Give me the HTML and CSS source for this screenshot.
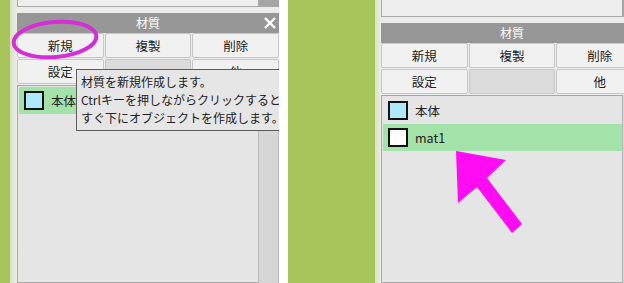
FILE: index.html
```html
<!DOCTYPE html>
<html lang="ja">
<head>
<meta charset="utf-8">
<link rel="stylesheet" href="styles.css">
</head>
<body>
<div class="page">
  <div class="shot shot--left">
    <div class="desk"></div>
    <div class="edge"></div>
    <div class="panel">
      <div class="topbox"><div class="topbox-main"></div><div class="topbox-scroll"></div></div>
      <div class="title">材質
        <svg class="close" width="12" height="12" viewBox="0 0 12 12"><path d="M1 1L11 11M11 1L1 11" stroke="#fff" stroke-width="2.4"/></svg>
      </div>
      <div class="buttons">
        <div class="btn">新規</div><div class="btn">複製</div><div class="btn">削除</div>
        <div class="btn">設定</div><div class="btn btn--blank"></div><div class="btn">他</div>
      </div>
      <div class="listwrap">
        <div class="list">
          <div class="row row--sel"><span class="swatch swatch--blue"></span><span class="label">本体</span></div>
        </div>
        <div class="track"></div>
      </div>
    </div>
    <div class="tooltip">材質を新規作成します。<br>Ctrlキーを押しながらクリックすると<br>すぐ下にオブジェクトを作成します。</div>
    <svg class="overlay" width="279" height="283" viewBox="0 0 279 283"><ellipse cx="55" cy="39.5" rx="41.5" ry="17.5" transform="rotate(-5 55 39.5)" fill="none" stroke="#d62ed6" stroke-width="4"/></svg>
  </div>
  <div class="gap"></div>
  <div class="shot shot--right">
    <div class="desk"></div>
    <div class="edge"></div>
    <div class="panel">
      <div class="topbox"><div class="topbox-main"></div><div class="topbox-scroll"></div></div>
      <div class="title">材質
        <svg class="close" width="12" height="12" viewBox="0 0 12 12"><path d="M1 1L11 11M11 1L1 11" stroke="#fff" stroke-width="2.4"/></svg>
      </div>
      <div class="buttons">
        <div class="btn">新規</div><div class="btn">複製</div><div class="btn">削除</div>
        <div class="btn">設定</div><div class="btn btn--blank"></div><div class="btn">他</div>
      </div>
      <div class="listwrap">
        <div class="list">
          <div class="row"><span class="swatch swatch--blue"></span><span class="label">本体</span></div>
          <div class="row row--sel"><span class="swatch swatch--white"></span><span class="label">mat1</span></div>
        </div>
        <div class="track"></div>
      </div>
    </div>
    <svg class="overlay" width="336" height="283" viewBox="0 0 336 283"><polygon points="168,151 218,160 199,178 234,224 224,233 189,187 170,203" fill="#ff0cf4"/></svg>
  </div>
</div>
</body>
</html>
```
FILE: styles.css
```css
* { box-sizing: border-box; margin: 0; padding: 0; }
html, body { width: 624px; height: 283px; overflow: hidden; background: #fff; }
body { font-family: "Noto Sans CJK JP", "Noto Sans", sans-serif; font-size: 12px; color: #222; }

.page { display: flex; height: 283px; }
.shot { position: relative; display: flex; flex: none; height: 283px; overflow: hidden; }
.shot--left { width: 279px; }
.shot--right { width: 336px; }
.gap { width: 9px; flex: none; background: #fff; }

.desk { flex: none; background: #a8c55b; }
.shot--left .desk { width: 10px; }
.shot--right .desk { width: 87px; }
.edge { flex: none; width: 7px; background: linear-gradient(90deg, #d9e2c4, #eceee8); }
.shot--right .edge { width: 6px; }

.panel { flex: none; width: 262px; display: flex; flex-direction: column; background: #ececec; }
.shot--left .panel { margin-top: -10px; }

.topbox { display: flex; height: 17px; flex: none; }
.topbox-main { width: 242px; background: #eeeeee; border: 1px solid #a9a9a9; border-top: none; }
.topbox-scroll { flex: 1; background: #a5a5a5; }

.title { position: relative; margin-top: 6px; height: 20px; flex: none; background: #979797; color: #fff; text-align: center; font-size: 12px; line-height: 20px; }
.close { position: absolute; right: 3px; top: 4px; }

.buttons { display: grid; grid-template-columns: repeat(3, 1fr); grid-auto-rows: 25px; gap: 1px 1px; flex: none; padding-bottom: 1px; }
.btn { background: #f1f1f1; border: 1px solid #c7c7c7; border-radius: 2px; text-align: center; line-height: 23px; font-size: 12.5px; color: #222; }
.btn--blank { background: #dbdbdb; }

.listwrap { display: flex; flex: 1; }
.list { width: 242px; background: #e5e5e5; border: 1px solid #a9a9a9; border-right-color: #b9b9b9; padding: 1px 0 0 1px; }
.track { flex: 1; background: #d6d6d6; border-right: 1px solid #bdbdbd; }

.row { display: flex; align-items: center; height: 27px; padding-left: 5px; }
.row--sel { background: #a3e3a9; }
.swatch { width: 20px; height: 19px; border: 2px solid #111; flex: none; }
.swatch--blue { background: #aee9fb; }
.swatch--white { background: #fff; }
.label { margin-left: 7px; font-size: 12.5px; color: #222; }

.tooltip { position: absolute; left: 76px; top: 69px; width: 240px; white-space: nowrap; background: #e6e6e6; border: 1px solid #5c5c5c; padding: 3px 4px; font-size: 12px; line-height: 18px; color: #222; }

.overlay { position: absolute; left: 0; top: 0; pointer-events: none; }
```
